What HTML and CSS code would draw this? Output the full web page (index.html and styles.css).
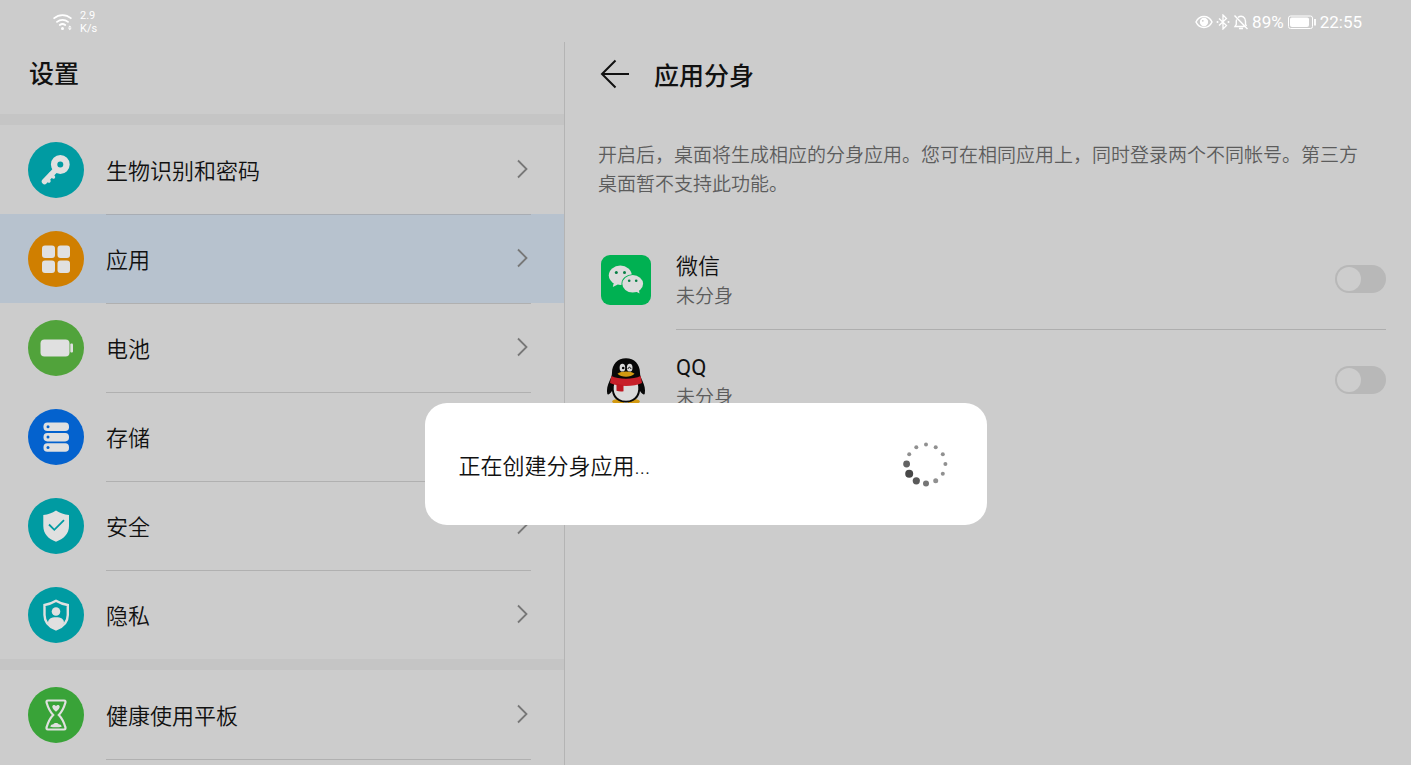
FILE: index.html
```html
<!DOCTYPE html>
<html lang="zh-CN">
<head>
    <meta charset="UTF-8">
    <meta name="viewport" content="width=device-width, initial-scale=1.0">
    <title>设置 - 应用分身</title>
    <link rel="stylesheet" href="styles.css">
</head>
<body>
    <svg class="sprite" aria-hidden="true">
        <symbol id="chevron" viewBox="0 0 12 20">
            <path d="M2 1.5 10.5 10 2 18.5" fill="none" stroke="currentColor" stroke-width="1.8"/>
        </symbol>
    </svg>

    <div class="status-bar">
        <div class="status-group">
            <svg width="20" height="18" viewBox="0 0 20 18" fill="none" stroke="currentColor" stroke-width="1.8" stroke-linecap="round">
                <path d="M1.2 5.2a12.5 12.5 0 0 1 16.6 0M4 8.9a8.5 8.5 0 0 1 11 0M6.8 12a4.5 4.5 0 0 1 5.4 0"/>
                <circle cx="9.5" cy="15.5" r="1.5" fill="currentColor" stroke="none"/>
                <path d="m15 14.5 1.8-2 1.8 2zM15 15.3l1.8 2 1.8-2z" fill="currentColor" stroke="none"/>
            </svg>
            <div class="net-speed">2.9<br>K/s</div>
        </div>
        <div class="status-group status-right">
            <svg width="18" height="16" viewBox="0 0 18 16" fill="none" stroke="currentColor" stroke-width="1.5">
                <path d="M1 8c3.5-7.3 12.5-7.3 16 0-3.5 7.3-12.5 7.3-16 0z"/>
                <circle cx="9" cy="8" r="3.4" fill="currentColor"/>
                <circle cx="7.8" cy="6.8" r="0.9" fill="#ccc" stroke="none"/>
            </svg>
            <svg width="14" height="16" viewBox="0 0 14 16" fill="none" stroke="currentColor" stroke-width="1.3">
                <path d="m3 4.5 7.5 7L7 15V1l3.5 3.5-7.5 7"/>
                <circle cx="1.5" cy="8" r="1" fill="currentColor" stroke="none"/>
                <circle cx="12.5" cy="8" r="1" fill="currentColor" stroke="none"/>
            </svg>
            <svg width="16" height="16" viewBox="0 0 16 16" fill="none" stroke="currentColor" stroke-width="1.4">
                <path d="M1.5 1.5 14.5 15M5 3.3c4-2.6 7.5.2 7.5 4v3l1 1.7M3.6 5.5C3 7 3.3 9 3.3 10.3L2 12.5h10M6 14.5h4"/>
            </svg>
            <span>89%</span>
            <svg width="30" height="16" viewBox="0 0 30 16" fill="none" stroke="currentColor">
                <rect x="1.5" y="2" width="24" height="12.5" rx="2"/>
                <rect x="3.5" y="4" width="18" height="8.5" rx="1" fill="currentColor"/>
                <path d="M28 5v6.5" stroke-width="1.8"/>
            </svg>
            <span>22:55</span>
        </div>
    </div>

    <div class="panes">
        <nav class="sidebar">
            <h1 class="sidebar-title">设置</h1>

            <div class="menu-group">
                <a class="menu-item" href="#">
                    <svg class="menu-icon" viewBox="0 0 56 56">
                        <circle cx="28" cy="28" r="28" fill="#009ba2"/>
                        <g fill="none" stroke="#e0e0e0">
                            <circle cx="32.3" cy="22.5" r="6.2" stroke-width="6.4"/>
                            <path d="M28 27.5 16.5 39.5" stroke-width="5.5" stroke-linecap="round"/>
                            <path d="m22.5 32 3 3M18.5 36.5l2.5 2.5" stroke-width="3.4" stroke-linecap="round"/>
                        </g>
                    </svg>
                    <span class="menu-body">生物识别和密码<svg class="chevron"><use href="#chevron"/></svg></span>
                </a>
                <a class="menu-item active" href="#" aria-current="page">
                    <svg class="menu-icon" viewBox="0 0 56 56">
                        <circle cx="28" cy="28" r="28" fill="#d07f00"/>
                        <g fill="#e0e0e0">
                            <rect x="14" y="14.5" width="13" height="12.5" rx="3"/>
                            <rect x="29.5" y="14.5" width="12.5" height="12.5" rx="3"/>
                            <rect x="14" y="29.5" width="13" height="12.5" rx="3"/>
                            <rect x="29.5" y="29.5" width="12.5" height="12.5" rx="3"/>
                        </g>
                    </svg>
                    <span class="menu-body">应用<svg class="chevron"><use href="#chevron"/></svg></span>
                </a>
                <a class="menu-item" href="#">
                    <svg class="menu-icon" viewBox="0 0 56 56">
                        <circle cx="28" cy="28" r="28" fill="#51a33b"/>
                        <g fill="#e0e0e0">
                            <rect x="12.5" y="19.5" width="29" height="17" rx="4"/>
                            <rect x="42.3" y="23.5" width="2.7" height="9" rx="1"/>
                        </g>
                    </svg>
                    <span class="menu-body">电池<svg class="chevron"><use href="#chevron"/></svg></span>
                </a>
                <a class="menu-item" href="#">
                    <svg class="menu-icon" viewBox="0 0 56 56">
                        <circle cx="28" cy="28" r="28" fill="#0462ce"/>
                        <g fill="#e0e0e0">
                            <rect x="15.5" y="13.5" width="25.5" height="8.5" rx="3.8"/>
                            <rect x="15.5" y="23.9" width="25.5" height="8.5" rx="3.8"/>
                            <rect x="15.5" y="34.3" width="25.5" height="8.5" rx="3.8"/>
                        </g>
                        <g fill="#0462ce">
                            <circle cx="20" cy="17.7" r="1.5"/>
                            <circle cx="20" cy="28.1" r="1.5"/>
                            <circle cx="20" cy="38.5" r="1.5"/>
                        </g>
                    </svg>
                    <span class="menu-body">存储<svg class="chevron"><use href="#chevron"/></svg></span>
                </a>
                <a class="menu-item" href="#">
                    <svg class="menu-icon" viewBox="0 0 56 56">
                        <circle cx="28" cy="28" r="28" fill="#009ba2"/>
                        <path d="M28 12.5c4 2.6 8 3.9 13 4.5v11c0 8-5.5 13-13 15.7C20.5 41 15.3 36 15.3 28V17c5-.6 8.7-1.9 12.7-4.5z" fill="#e0e0e0"/>
                        <path d="m21 26.5 5.3 5.3 9.7-9.6" fill="none" stroke="#009ba2" stroke-width="1.8"/>
                    </svg>
                    <span class="menu-body">安全<svg class="chevron"><use href="#chevron"/></svg></span>
                </a>
                <a class="menu-item" href="#">
                    <svg class="menu-icon" viewBox="0 0 56 56">
                        <circle cx="28" cy="28" r="28" fill="#009ba2"/>
                        <path d="M28 13.8c3.7 2.3 7.3 3.6 11.8 4.2v10c0 7.3-5 11.9-11.8 14.4C21.2 39.9 16.5 35.3 16.5 28V18c4.5-.6 7.8-1.9 11.5-4.2z" fill="none" stroke="#e0e0e0" stroke-width="2.4"/>
                        <circle cx="28" cy="24.5" r="4.3" fill="#e0e0e0"/>
                        <path d="M20 36c0-4 3-5.7 8-5.7s8 1.7 8 5.7c-2 3.3-5 5.3-8 6.4-3-1.1-6-3.1-8-6.4z" fill="#e0e0e0"/>
                    </svg>
                    <span class="menu-body">隐私<svg class="chevron"><use href="#chevron"/></svg></span>
                </a>
            </div>

            <div class="menu-group">
                <a class="menu-item" href="#">
                    <svg class="menu-icon" viewBox="0 0 56 56">
                        <circle cx="28" cy="28" r="28" fill="#39a338"/>
                        <path d="M20 13.5h16c1.5 0 1.8 1.2 1.3 2.5-1.5 5-3.5 9-6.5 12 3 3 5 7 6.5 12 .5 1.3.2 2.5-1.3 2.5H20c-1.5 0-1.8-1.2-1.3-2.5 1.5-5 3.5-9 6.5-12-3-3-5-7-6.5-12-.5-1.3-.2-2.5 1.3-2.5z" fill="none" stroke="#e0e0e0" stroke-width="2.2"/>
                        <path d="M28 24.8c-2-1.8-3.7-3.5-3.7-5 0-2 2.7-2.3 3.7-.6 1-1.7 3.7-1.4 3.7.6 0 1.5-1.7 3.2-3.7 5zM22.3 39.8c.5-2 1.5-2.5 3-2.6.7-1.7 4.7-1.7 5.4 0 1.5.1 2.5.6 3 2.6-3.5.7-8 .7-11.4 0z" fill="#e0e0e0"/>
                    </svg>
                    <span class="menu-body">健康使用平板<svg class="chevron"><use href="#chevron"/></svg></span>
                </a>
            </div>
        </nav>

        <main class="detail">
            <header class="detail-header">
                <button class="back" type="button" aria-label="返回">
                    <svg width="30" height="30" viewBox="0 0 30 30" fill="none" stroke="currentColor" stroke-width="2">
                        <path d="M15.5 1.5 2 15l13.5 13.5M2 15h27"/>
                    </svg>
                </button>
                <h2>应用分身</h2>
            </header>

            <p class="description">开启后，桌面将生成相应的分身应用。您可在相同应用上，同时登录两个不同帐号。第三方桌面暂不支持此功能。</p>

            <div class="app-list">
                <div class="app-row">
                    <svg class="app-icon" viewBox="0 0 50 50">
                        <rect width="50" height="50" rx="9" fill="#00b152"/>
                        <g fill="#dcdcdc">
                            <path d="m13 27-1.2 5 5-2.5z"/>
                            <ellipse cx="19.3" cy="20.3" rx="11.5" ry="9.7"/>
                            <ellipse cx="31.7" cy="28.8" rx="11.2" ry="9.5" fill="#00b152"/>
                            <ellipse cx="31.7" cy="28.8" rx="10.4" ry="8.7"/>
                            <path d="m34 36 4.5 2.5-.8-4.5z"/>
                        </g>
                        <g fill="#087f45">
                            <circle cx="15.3" cy="17.5" r="1.5"/>
                            <circle cx="23.5" cy="17.5" r="1.5"/>
                            <circle cx="28.2" cy="25.8" r="1.3"/>
                            <circle cx="35.2" cy="25.8" r="1.3"/>
                        </g>
                    </svg>
                    <label class="app-body" for="clone-wechat">
                        <span class="app-text"><span class="app-name">微信</span><span class="app-state">未分身</span></span>
                        <input class="switch" type="checkbox" role="switch" id="clone-wechat">
                    </label>
                </div>
                <div class="app-row">
                    <svg class="app-icon" viewBox="0 0 50 50">
                        <g fill="#d39a12">
                            <ellipse cx="17.5" cy="45.5" rx="6.3" ry="2.5"/>
                            <ellipse cx="32.5" cy="45.5" rx="6.3" ry="2.5"/>
                        </g>
                        <path d="M25 2.3c8.3 0 14 6 14 14.5 0 3 1 5 2.5 8.2 2 4.2 3 8.5 2.3 12.5-.4 2.3-2.8.5-4.8-2.5-1 7.5-6.5 11.5-14 11.5S12 42.5 11 35c-2 3-4.4 4.8-4.8 2.5-.7-4 .3-8.300 2.300-12.500 1.500-3.200 2.500-5.200 2.500-8.200 0-8.500 5.700-14.500 14-14.500z" fill="#080808"/>
                        <path d="M13.5 27c6 2.5 17 2.5 23 0 2.8 9-1.5 17.8-11.5 17.8S10.7 36 13.5 27z" fill="#dadada"/>
                        <path d="M10.5 20c7 3.5 22 3.5 29 0 .8 2.2 1.2 4.5 1.5 7-7.5 4-24.5 4-32 0 .3-2.5.7-4.8 1.5-7z" fill="#c8202a"/>
                        <path d="M15.5 27.5c2.5 1 4.5 1.2 7 1.4v6.3c-2.3.4-4.8.2-7-.5z" fill="#bd1722"/>
                        <g fill="#dadada">
                            <ellipse cx="21.4" cy="11.7" rx="2.8" ry="3.9"/>
                            <ellipse cx="28.7" cy="11.7" rx="2.8" ry="3.9"/>
                        </g>
                        <circle cx="22.2" cy="12" r="1.3" fill="#080808"/>
                        <path d="M27 13c.3-2.3 2.6-2.3 2.9 0" fill="none" stroke="#080808"/>
                        <path d="M16.5 17.8c3.5-3 13.5-3 17 0-3.5 4-13.5 4-17 0z" fill="#d39a12"/>
                    </svg>
                    <label class="app-body" for="clone-qq">
                        <span class="app-text"><span class="app-name" lang="en">QQ</span><span class="app-state">未分身</span></span>
                        <input class="switch" type="checkbox" role="switch" id="clone-qq">
                    </label>
                </div>
            </div>
        </main>
    </div>

    <div class="overlay">
        <div class="dialog" role="dialog" aria-labelledby="dialog-text">
            <span id="dialog-text">正在创建分身应用...</span>
            <svg class="spinner" viewBox="-24 -24 48 48" fill="#484848">
                <g opacity="0.6">
                    <circle cx="19.4" cy="0" r="2"/>
                    <circle cx="16.8" cy="9.7" r="2"/>
                    <circle cx="9.7" cy="16.8" r="2.5"/>
                    <circle cx="-16.8" cy="-9.7" r="2"/>
                    <circle cx="-9.7" cy="-16.8" r="2"/>
                    <circle cx="0" cy="-19.4" r="2"/>
                    <circle cx="9.7" cy="-16.8" r="2"/>
                    <circle cx="16.8" cy="-9.7" r="2"/>
                </g>
                <circle cx="0" cy="19.4" r="3" opacity="0.75"/>
                <circle cx="-9.7" cy="16.8" r="3.6" opacity="0.9"/>
                <circle cx="-16.8" cy="9.7" r="4"/>
                <circle cx="-19.4" cy="0" r="3.4" opacity="0.85"/>
            </svg>
        </div>
    </div>
</body>
</html>
```
FILE: styles.css
```css
* {
    margin: 0;
    padding: 0;
    box-sizing: border-box;
}

body {
    font-family: Roboto, "Noto Sans CJK SC", sans-serif;
    font-size: 22px;
    font-weight: 350;
    color: #111;
    background: #ccc;
    height: 100vh;
    display: flex;
    flex-direction: column;
    overflow: hidden;
}

.sprite {
    display: none;
}

/* status bar */
.status-bar {
    display: flex;
    justify-content: space-between;
    align-items: center;
    height: 42px;
    padding: 2px 49px 0 53px;
    font-weight: 400;
    color: #fff;
    flex-shrink: 0;
}

.status-group {
    display: flex;
    align-items: center;
    gap: 7px;
}

.status-right {
    gap: 3px;
    font-size: 17px;
}

.net-speed {
    font-size: 11px;
    line-height: 13px;
}

.panes {
    display: flex;
    flex: 1;
    min-height: 0;
}

/* left pane */
.sidebar {
    flex: 0 0 565px;
    border-right: 1px solid #b4b4b4;
    overflow: hidden;
}

.sidebar-title {
    height: 72px;
    padding-left: 29px;
    font-size: 25px;
    font-weight: 500;
    line-height: 66px;
}

.menu-group {
    border-top: 11px solid #c5c5c5;
}

.menu-item {
    display: flex;
    align-items: center;
    gap: 22px;
    padding: 0 33px 0 28px;
    color: inherit;
    text-decoration: none;
}

.menu-item.active {
    background: #b7c2ce;
}

.menu-icon {
    width: 56px;
    height: 56px;
    flex-shrink: 0;
}

.menu-body {
    display: flex;
    flex: 1;
    align-items: center;
    justify-content: space-between;
    height: 89px;
    padding: 0 3px 2px 0;
    border-top: 1px solid transparent;
}

.menu-item + .menu-item .menu-body {
    border-top-color: #b0b0b0;
}

.menu-item.active .menu-body {
    border-top-color: #a8adb4;
}

.menu-group:last-child .menu-body {
    height: 90px;
    border-bottom: 1px solid #b0b0b0;
}

.chevron {
    width: 12px;
    height: 20px;
    color: #777;
}

/* right pane */
.detail {
    flex: 1;
    min-width: 0;
}

.detail-header {
    display: flex;
    align-items: center;
    gap: 24px;
    height: 64px;
    padding-left: 35px;
}

.detail-header h2 {
    font-size: 25px;
    font-weight: 500;
}

.back {
    display: flex;
    border: none;
    background: none;
    color: #111;
}

.description {
    padding: 35px 36px 30px 33px;
    font-size: 19px;
    line-height: 29px;
    color: #5c5c5c;
}

.app-row {
    display: flex;
    align-items: center;
    gap: 25px;
    padding: 0 25px 0 36px;
}

.app-icon {
    width: 50px;
    height: 50px;
    flex-shrink: 0;
}

.app-body {
    display: flex;
    flex: 1;
    align-items: center;
    justify-content: space-between;
    height: 101px;
    border-bottom: 1px solid #aeaeae;
}

.app-row:last-child .app-body {
    border-bottom-color: transparent;
}

.app-text {
    display: flex;
    flex-direction: column;
    padding-top: 4px;
}

.app-name {
    line-height: 32px;
}

.app-name:lang(en) {
    font-weight: 400;
}

.app-state {
    font-size: 19px;
    line-height: 28px;
    color: #5c5c5c;
}

.switch {
    appearance: none;
    width: 51px;
    height: 28px;
    padding: 2px;
    border-radius: 14px;
    background: #b8b8b8;
}

.switch::before {
    content: "";
    display: block;
    width: 24px;
    height: 24px;
    border-radius: 50%;
    background: #cdcdcd;
}

.switch:checked::before {
    margin-left: auto;
}

/* progress dialog */
.overlay {
    position: fixed;
    inset: 0;
    display: flex;
    justify-content: center;
    align-items: flex-end;
    padding-bottom: 240px;
}

.dialog {
    display: flex;
    align-items: center;
    justify-content: space-between;
    width: 562px;
    max-width: 90%;
    padding: 37px 37px 37px 34px;
    border-radius: 22px;
    background: #fff;
}

.spinner {
    width: 48px;
    height: 48px;
}
```
